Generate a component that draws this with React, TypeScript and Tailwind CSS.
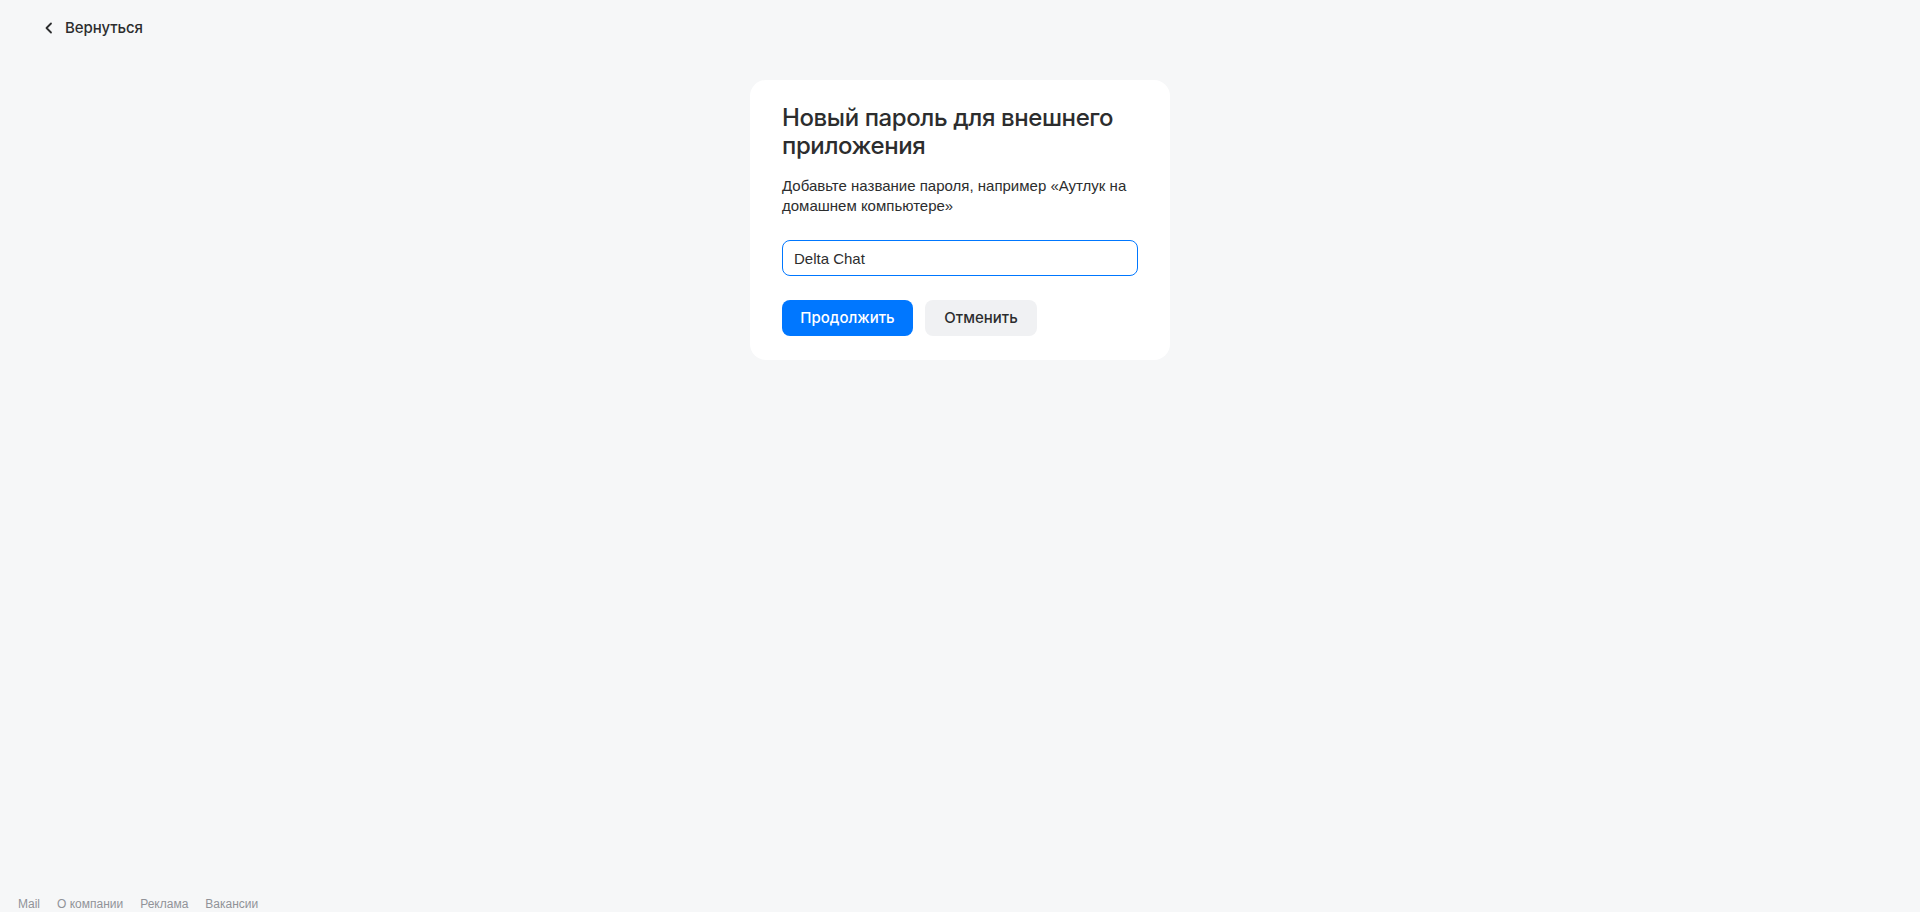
import React from "react";

function ChevronLeft() {
  return (
    <svg width="16" height="16" viewBox="0 0 16 16" fill="none">
      <path d="M10 3.5 5.5 8l4.5 4.5" stroke="#2c2d2e" strokeWidth="1.8" strokeLinecap="round" strokeLinejoin="round" />
    </svg>
  );
}

export default function App() {
  return (
    <div className="h-screen bg-[#f6f7f8] flex flex-col text-[#2c2d2e] font-['Inter',sans-serif] overflow-hidden">
      <header className="h-[56px] flex items-center pl-[41px]">
        <button className="flex items-center gap-[8px] text-[15px] font-medium tracking-[-0.1px]">
          <ChevronLeft />
          Вернуться
        </button>
      </header>

      <main className="flex-1 flex justify-center pt-[24px]">
        <div className="w-[420px] self-start bg-white rounded-[16px] px-[32px] pt-[24px] pb-[24px]">
          <h1 className="text-[24px] leading-[28px] font-medium tracking-[-0.4px]">
            Новый пароль для внешнего приложения
          </h1>
          <p className="mt-[16px] text-[15px] leading-[20px] font-['Liberation_Sans',Arial,sans-serif]">
            Добавьте название пароля, например «Аутлук на домашнем компьютере»
          </p>
          <input
            defaultValue="Delta Chat"
            className="mt-[24px] w-full h-[36px] rounded-[8px] border border-[#0077ff] px-[11px] text-[15px] font-['Liberation_Sans',Arial,sans-serif] outline-none"
          />
          <div className="mt-[24px] flex gap-[12px]">
            <button className="h-[36px] w-[131px] rounded-[8px] bg-[#0077ff] text-white text-[15px] font-medium">
              Продолжить
            </button>
            <button className="h-[36px] w-[112px] rounded-[8px] bg-[#f0f1f3] text-[15px] font-medium">
              Отменить
            </button>
          </div>
        </div>
      </main>

      <footer className="h-[17px] flex items-start gap-[17px] pl-[18px] text-[12px] text-[#919399] font-['Liberation_Sans',Arial,sans-serif]">
        <a>Mail</a>
        <a>О компании</a>
        <a>Реклама</a>
        <a>Вакансии</a>
      </footer>
    </div>
  );
}
